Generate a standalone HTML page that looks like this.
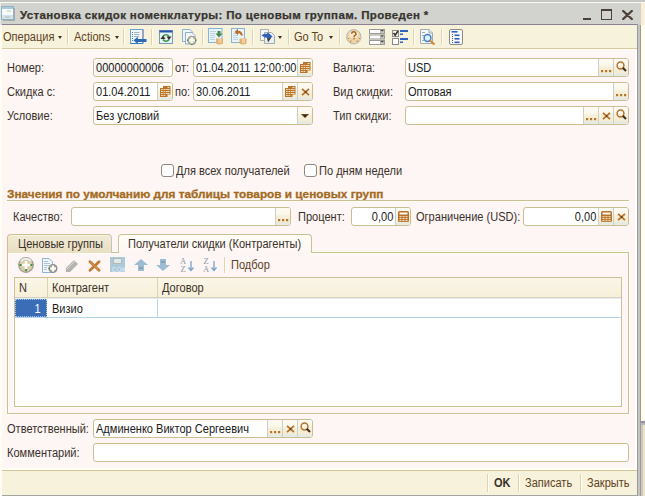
<!DOCTYPE html><html><head><meta charset="utf-8"><style>
*{box-sizing:border-box;margin:0;padding:0}
html,body{width:645px;height:496px;overflow:hidden;background:#fff;font-family:"Liberation Sans",sans-serif;font-size:11px;color:#3a3228}
.a{position:absolute}
.lbl{position:absolute;white-space:nowrap;color:#3a3129;font-size:12px;line-height:13px;transform:scaleX(0.92);transform-origin:0 0}
.fld{position:absolute;height:19px;border:1px solid #cbbd92;border-radius:3px;background:#fff;overflow:hidden}
.fld .t{position:absolute;left:2px;top:3px;font-size:12px;line-height:13px;color:#202020;white-space:nowrap;transform:scaleX(0.92);transform-origin:0 0}
.btn{position:absolute;top:0;bottom:0;width:15px;background:linear-gradient(#fcfaf3 0,#faf6ea 40%,#f6efda 45%,#f4ecd4 82%,#e2eae4 88%,#e6ece6 100%);border-left:1px solid #cdcfca}
.sep{position:absolute;width:1px;background:#e0d4ae;box-shadow:1px 0 0 #fffdf5}
.tbt{position:absolute;white-space:nowrap;color:#604222;font-size:12px;line-height:13px;transform:scaleX(0.92);transform-origin:0 0}
.arr{position:absolute;width:0;height:0;border-left:2.5px solid transparent;border-right:2.5px solid transparent;border-top:3px solid #3a3228}
.dots{position:absolute;left:2px;bottom:3px;width:10px;height:2px;background:linear-gradient(90deg,#c07828 0 2px,transparent 2px 4px,#c07828 4px 6px,transparent 6px 8px,#c07828 8px 10px)}
</style></head><body>
<div class="a" style="left:0px;top:0px;width:645px;height:2px;background:#c6c6c2;"></div>
<div class="a" style="left:0px;top:2px;width:645px;height:1px;background:#fbfaf2;"></div>
<div class="a" style="left:0px;top:3px;width:641px;height:22px;background:#d2d2ce;"></div>
<div class="a" style="left:641px;top:3px;width:4px;height:22px;background:#f7f0d6;"></div>
<div class="a" style="left:1px;top:24px;width:637px;height:1px;background:#8a8294;"></div>
<div class="a" style="left:2px;top:25px;width:635px;height:23px;background:#f7f2dc;"></div>
<div class="a" style="left:2px;top:48px;width:635px;height:1px;background:#d6c9a0;"></div>
<div class="a" style="left:2px;top:49px;width:635px;height:421px;background:#fdf6f5;"></div>
<div class="a" style="left:2px;top:49px;width:635px;height:1px;background:#fffcf2;"></div>
<div class="a" style="left:2px;top:468px;width:635px;height:2px;background:#fffdf4;"></div>
<div class="a" style="left:2px;top:470px;width:635px;height:1px;background:#d2c49c;"></div>
<div class="a" style="left:2px;top:471px;width:635px;height:24px;background:#f7f2dc;"></div>
<div class="a" style="left:1px;top:495px;width:637px;height:1px;background:#a4a4a0;"></div>
<div class="a" style="left:0px;top:3px;width:2px;height:493px;background:#fffef2;"></div>
<div class="a" style="left:0px;top:3px;width:1px;height:22px;background:#e6e6de;"></div>
<div class="a" style="left:1px;top:3px;width:1px;height:22px;background:#d2d2ce;"></div>
<div class="a" style="left:635px;top:49px;width:2px;height:421px;background:#fffdf8;"></div>
<div class="a" style="left:637px;top:24px;width:1px;height:472px;background:#9d96a4;"></div>
<div class="a" style="left:638px;top:25px;width:2px;height:471px;background:#c4c4c0;"></div>
<div class="a" style="left:640px;top:25px;width:1px;height:471px;background:#9a9a96;"></div>
<div class="a" style="left:641px;top:25px;width:4px;height:471px;background:#fffdf0;"></div>
<div class="a" style="left:641px;top:421px;width:4px;height:2px;background:#9890a0;"></div>
<div class="a" style="left:641px;top:423px;width:4px;height:2px;background:#b8b8b4;"></div>
<div class="a" style="left:641px;top:425px;width:2px;height:71px;background:#c8c8c4;"></div>
<div class="a" style="left:643px;top:425px;width:2px;height:71px;background:#ece2c4;"></div>
<svg class="a" style="left:1px;top:6px" width="14" height="15" viewBox="0 0 14 15">
<rect x="0.5" y="0.5" width="12" height="13" fill="#f4f9fc" stroke="#8fb2c8"/>
<rect x="1" y="1" width="11" height="2" fill="#a9c9dc"/>
<rect x="1" y="9" width="11" height="4" fill="#cfe3ee"/>
<line x1="6" y1="5" x2="10" y2="5" stroke="#b9c9a0"/>
<line x1="4" y1="11" x2="9" y2="11" stroke="#c9b79a"/>
<rect x="13" y="2" width="1" height="12" fill="#a8a8a4"/>
<rect x="2" y="14" width="12" height="1" fill="#a8a8a4"/>
</svg>
<div class="a" style="left:20px;top:8px;font-size:11.5px;letter-spacing:0.36px;font-weight:bold;color:#38352f;-webkit-text-stroke:0.25px #38352f;white-space:nowrap;line-height:14px">Установка скидок номенклатуры: По ценовым группам. Проведен *</div>
<div class="a" style="left:583px;top:17.5px;width:8px;height:2.5px;background:#4a4038;"></div>
<div class="a" style="left:601px;top:9px;width:11px;height:11px;border:1.3px solid #4a4038;border-top-width:2px"></div>
<svg class="a" style="left:622px;top:10px" width="11" height="10" viewBox="0 0 11 10"><path d="M1.2 1 L9.8 9 M9.8 1 L1.2 9" stroke="#4a4038" stroke-width="2.3" stroke-linecap="round"/></svg>
<div class="tbt" style="left:3px;top:31px;">Операция</div>
<div class="arr" style="left:58px;top:36px;border-top-color:#3a3228"></div>
<div class="sep" style="left:67px;top:29px;height:16px"></div>
<div class="tbt" style="left:74px;top:31px;">Actions</div>
<div class="arr" style="left:115px;top:36px;border-top-color:#3a3228"></div>
<div class="sep" style="left:123px;top:29px;height:16px"></div>
<svg class="a" style="left:130px;top:29px" width="17" height="17" viewBox="0 0 17 17">
<rect x="0.5" y="0.5" width="12.5" height="14" fill="#eef6fb" stroke="#6f9fcf"/>
<rect x="12.5" y="1" width="1" height="13" fill="#8a7a9a"/>
<path d="M4 3.5h5.5M4 5.5h5.5M4 7.5h5" stroke="#a8b0b8"/>
<path d="M2 3.5h1M2 5.5h1M2 7.5h1M2 9.5h1M2 11.5h1" stroke="#5080b0"/>
<rect x="0.5" y="14" width="12.5" height="1" fill="#3f7fc0"/>
<path d="M3.5 11.3 L7.8 7.8 L7.8 10 L16.5 10 L16.5 13 L7.8 13 L7.8 15.2 Z" fill="#2a68b8"/>
</svg>
<div class="sep" style="left:151px;top:29px;height:16px"></div>
<svg class="a" style="left:159px;top:30px" width="14" height="14" viewBox="0 0 14 14">
<rect x="0.5" y="0.5" width="13" height="13" fill="#e6f4fa" stroke="#7a9ab4"/>
<rect x="0.5" y="0.5" width="13" height="2" fill="#2452b0"/>
<path d="M4 6.5 a3.5 3.5 0 0 1 6 0 M10 9.5 a3.5 3.5 0 0 1 -6 0" stroke="#3a9a4a" stroke-width="1.5" fill="none"/>
<path d="M1.5 9 L4 5.5 L6.5 9Z" fill="#3a3020"/>
<path d="M7.5 6.5 L12.5 6.5 L10 10Z" fill="#3a3020"/>
</svg>
<svg class="a" style="left:182px;top:29px" width="16" height="16" viewBox="0 0 16 16">
<path d="M0.5 0.5 H8 L10.5 3 V12.5 H0.5Z" fill="#eef6fb" stroke="#8fb0cc"/>
<path d="M3.5 3.5 H10 L13 6.5 V15 H3.5Z" fill="#f6f9fc" stroke="#8fb0cc"/>
<circle cx="9.8" cy="11.3" r="4.6" fill="#9a9a96"/>
<circle cx="9.8" cy="11.3" r="3.4" fill="#c8c0a0"/>
<path d="M9.8 8.3v6M6.8 11.3h6" stroke="#f8fbf8" stroke-width="2.2"/>
<rect x="5.2" y="10.5" width="1.3" height="1.6" fill="#3f8f3f"/><rect x="13.1" y="10.5" width="1.3" height="1.6" fill="#3f8f3f"/>
<rect x="9" y="15" width="1.6" height="1" fill="#3f8f3f"/>
</svg>
<div class="sep" style="left:202px;top:29px;height:16px"></div>
<svg class="a" style="left:208px;top:28px" width="16" height="17" viewBox="0 0 16 17">
<rect x="0.5" y="0.5" width="13.5" height="14" fill="#e8f4fa" stroke="#8ab4d4"/>
<path d="M2 3.5h6M2 5.5h5M2 7.5h5M2 9.5h5M2 11.5h5" stroke="#c0d4e0"/>
<path d="M9.5 3 L12.5 3 L12.5 5.5 L14.5 5.5 L11 9.5 L7.5 5.5 L9.5 5.5Z" fill="#4a8a48"/>
<path d="M8 10.5 h7 v5 q-3.5 2 -7 0Z" fill="#e2b070"/>
<path d="M8 10.5 q3.5 -1.2 7 0" fill="#f0d0a0"/>
<path d="M10.5 12h3M10.5 14h3" stroke="#fff4e0" stroke-width="0.9"/>
</svg>
<svg class="a" style="left:231px;top:28px" width="16" height="17" viewBox="0 0 16 17">
<rect x="0.5" y="0.5" width="13" height="14" fill="#e8f4fa" stroke="#8ab4d4"/>
<path d="M2 5.5h5M2 7.5h5M2 9.5h5M2 11.5h5" stroke="#c0d4e0"/>
<path d="M3.5 4 L7 0.8 L7 2.8 Q11 2.8 12 7.5 L10 7.5 Q9.5 5.2 7 5.2 L7 7.2Z" fill="#b86e28"/>
<path d="M8.5 10.5 h7 v5 q-3.5 2 -7 0Z" fill="#e2b070"/>
<path d="M8.5 10.5 q3.5 -1.2 7 0" fill="#f0d0a0"/>
<path d="M11 12h3M11 14h3" stroke="#fff4e0" stroke-width="0.9"/>
</svg>
<div class="sep" style="left:252px;top:29px;height:16px"></div>
<svg class="a" style="left:260px;top:29px" width="16" height="16" viewBox="0 0 16 16">
<rect x="0.5" y="0.5" width="8" height="11" fill="#f4f6f8" stroke="#b0b0b0"/>
<path d="M4.5 3.5 H11.5 L14.5 6.5 V14.5 H4.5Z" fill="#e4f2f8" stroke="#a8a8a8"/>
<path d="M1.5 6.5 Q4 4 6.5 5 L8 3.5 L12.5 7.5 L8.5 11 L8 9 Q5 9 1.5 6.5Z" fill="#2f62b4"/>
<path d="M7 9 L11 9 L8 13.5Z" fill="#4a3a2a"/>
</svg>
<div class="arr" style="left:278px;top:36px;border-top-color:#3a3228"></div>
<div class="sep" style="left:288px;top:29px;height:16px"></div>
<div class="tbt" style="left:294px;top:31px;">Go To</div>
<div class="arr" style="left:329px;top:36px;border-top-color:#3a3228"></div>
<div class="sep" style="left:339px;top:29px;height:16px"></div>
<svg class="a" style="left:346px;top:29px" width="16" height="16" viewBox="0 0 16 16">
<circle cx="7.8" cy="7.8" r="7.2" fill="#ecd4a6" stroke="#aab0bc" stroke-width="0.9"/>
<ellipse cx="7.8" cy="5.5" rx="4.5" ry="3.6" fill="#f6ead0"/>
<path d="M5.6 4.8 a2.2 2 0 1 1 3.2 1.8 q-0.8 0.4 -0.8 1.6" stroke="#a8621e" stroke-width="1.5" fill="none"/>
<rect x="7.3" y="9" width="1.3" height="1.3" fill="#a8621e"/>
<g fill="#c88838"><rect x="4" y="11.5" width="1.4" height="1.4"/><rect x="10.5" y="11.5" width="1.4" height="1.4"/><rect x="2" y="9" width="1" height="1"/><rect x="13" y="9" width="1" height="1"/></g>
</svg>
<svg class="a" style="left:369px;top:29px" width="16" height="16" viewBox="0 0 16 16">
<g fill="#9a9a98"><rect x="0" y="0" width="16" height="5"/><rect x="0" y="5.5" width="16" height="5"/><rect x="0" y="11" width="16" height="5"/></g>
<g fill="#fff"><rect x="1" y="1" width="10" height="3"/><rect x="1" y="6.5" width="10" height="3"/><rect x="1" y="12" width="10" height="3"/></g>
<g fill="#c8c8c4"><rect x="11.5" y="1" width="3.5" height="3"/><rect x="11.5" y="6.5" width="3.5" height="3"/><rect x="11.5" y="12" width="3.5" height="3"/></g>
<g fill="#4a3a30"><path d="M11.5 1h3.5l-1.75 1.5z"/><path d="M11.5 6.5h3.5l-1.75 1.5z"/><path d="M11.5 12h3.5l-1.75 1.5z"/></g>
</svg>
<svg class="a" style="left:392px;top:29px" width="17" height="16" viewBox="0 0 17 16">
<rect x="0.5" y="1.5" width="6" height="6" fill="#f4f4f0" stroke="#8a8a88"/>
<path d="M1.5 4 L3.2 6.2 L6 2" stroke="#3a2a20" stroke-width="1.5" fill="none"/>
<rect x="0.5" y="9.5" width="6" height="6" fill="#fff" stroke="#8a8a88"/>
<rect x="8" y="1" width="8" height="2" fill="#2f62c0"/><rect x="8" y="4.5" width="3" height="1.5" fill="#2f62c0"/>
<rect x="8" y="9" width="8" height="2" fill="#2f62c0"/><rect x="8" y="12.5" width="3" height="1.5" fill="#2f62c0"/>
</svg>
<div class="sep" style="left:413px;top:29px;height:16px"></div>
<svg class="a" style="left:420px;top:29px" width="17" height="16" viewBox="0 0 17 16">
<path d="M0.5 0.5 H9 L12.5 4 V14.5 H0.5Z" fill="#f6f8fa" stroke="#a0aab4"/>
<path d="M9 0.5 V4 H12.5" fill="#dde6ee" stroke="#a0aab4"/>
<rect x="2" y="3" width="3" height="1" fill="#9aaabb"/><rect x="2" y="6" width="2" height="1" fill="#9aaabb"/><rect x="2" y="11" width="2" height="1" fill="#9aaabb"/>
<circle cx="7.5" cy="9" r="3.4" fill="#e4f0f8" stroke="#3f82c4" stroke-width="1.5"/>
<path d="M10 11.5 L14.5 15.5" stroke="#d48a3a" stroke-width="2.2"/>
</svg>
<div class="sep" style="left:441px;top:29px;height:16px"></div>
<svg class="a" style="left:449px;top:29px" width="14" height="16" viewBox="0 0 14 16">
<rect x="0.5" y="0.5" width="13" height="15" rx="1.5" fill="#fafafa" stroke="#8c8c8c"/>
<rect x="2.5" y="2" width="6" height="1.6" fill="#2f62c0"/>
<rect x="5.5" y="5.5" width="5" height="1.6" fill="#2f62c0"/>
<rect x="5.5" y="9" width="5" height="1.6" fill="#2f62c0"/>
<rect x="5.5" y="12.5" width="5" height="1.6" fill="#2f62c0"/>
<g fill="#555"><rect x="3" y="5" width="1" height="1"/><rect x="3" y="7" width="1" height="1"/><rect x="3" y="9" width="1" height="1"/><rect x="3" y="11" width="1" height="1"/><rect x="3" y="13" width="1" height="1"/></g>
</svg>
<div class="lbl" style="left:7px;top:62px;">Номер:</div>
<div class="fld" style="left:93px;top:58px;width:80px;height:19px;background:#fff"></div>
<div class="a" style="left:95px;top:60px;width:74px;height:15px;background:#f7f4f0;"></div>
<div class="lbl" style="left:96px;top:62px;color:#202020">00000000006</div>
<div class="lbl" style="left:175px;top:62px;">от:</div>
<div class="fld" style="left:193px;top:58px;width:120px;height:19px;background:#fff"><div class="t" style="left:2px;color:#202020">01.04.2011 12:00:00</div><div class="btn" style="left:103px"><svg class="a" style="left:2px;top:3px" width="12" height="12" viewBox="0 0 12 12"><rect x="3" y="0" width="7.5" height="8.5" fill="#b8742a"/><rect x="0" y="2" width="7.5" height="9" fill="#b8742a"/><g fill="#f2dcb8"><rect x="7.5" y="1" width="2" height="1"/><rect x="7.5" y="3" width="2" height="1"/><rect x="7.5" y="5" width="2" height="1"/><rect x="7.5" y="7" width="2" height="1"/><rect x="1" y="3" width="1.8" height="1"/><rect x="3.5" y="3" width="1.8" height="1"/><rect x="6" y="3" width="1.8" height="1"/><rect x="1" y="5" width="1.8" height="1"/><rect x="3.5" y="5" width="1.8" height="1"/><rect x="1" y="7" width="1.8" height="1"/><rect x="3.5" y="7" width="1.8" height="1"/><rect x="1" y="9" width="1.8" height="1"/><rect x="3.5" y="9" width="1.8" height="1"/><rect x="6" y="5" width="1.8" height="1"/><rect x="6" y="7" width="1.8" height="1"/></g></svg></div></div>
<div class="lbl" style="left:333px;top:62px;">Валюта:</div>
<div class="fld" style="left:405px;top:58px;width:224px;height:19px;background:#fff"><div class="t" style="left:2px;color:#202020">USD</div><div class="btn" style="left:192px"><svg class="a" style="left:2px;top:11px" width="11" height="3"><rect x="0" y="0" width="2.2" height="2.2" fill="#b8742a"/><rect x="4" y="0" width="2.2" height="2.2" fill="#b8742a"/><rect x="8" y="0" width="2.2" height="2.2" fill="#b8742a"/></svg></div><div class="btn" style="left:207px"><svg class="a" style="left:2px;top:2px" width="11" height="11" viewBox="0 0 11 11"><circle cx="4.5" cy="4.5" r="3.4" fill="none" stroke="#b8742a" stroke-width="1.5"/><path d="M6.8 6.8 L10 10" stroke="#3a3028" stroke-width="2.1"/></svg></div></div>
<div class="lbl" style="left:7px;top:86px;">Скидка с:</div>
<div class="fld" style="left:93px;top:82px;width:80px;height:19px;background:#fff"><div class="t" style="left:2px;color:#202020">01.04.2011</div><div class="btn" style="left:63px"><svg class="a" style="left:2px;top:3px" width="12" height="12" viewBox="0 0 12 12"><rect x="3" y="0" width="7.5" height="8.5" fill="#b8742a"/><rect x="0" y="2" width="7.5" height="9" fill="#b8742a"/><g fill="#f2dcb8"><rect x="7.5" y="1" width="2" height="1"/><rect x="7.5" y="3" width="2" height="1"/><rect x="7.5" y="5" width="2" height="1"/><rect x="7.5" y="7" width="2" height="1"/><rect x="1" y="3" width="1.8" height="1"/><rect x="3.5" y="3" width="1.8" height="1"/><rect x="6" y="3" width="1.8" height="1"/><rect x="1" y="5" width="1.8" height="1"/><rect x="3.5" y="5" width="1.8" height="1"/><rect x="1" y="7" width="1.8" height="1"/><rect x="3.5" y="7" width="1.8" height="1"/><rect x="1" y="9" width="1.8" height="1"/><rect x="3.5" y="9" width="1.8" height="1"/><rect x="6" y="5" width="1.8" height="1"/><rect x="6" y="7" width="1.8" height="1"/></g></svg></div></div>
<div class="lbl" style="left:175px;top:86px;">по:</div>
<div class="fld" style="left:193px;top:82px;width:120px;height:19px;background:#fff"><div class="t" style="left:2px;color:#202020">30.06.2011</div><div class="btn" style="left:88px"><svg class="a" style="left:2px;top:3px" width="12" height="12" viewBox="0 0 12 12"><rect x="3" y="0" width="7.5" height="8.5" fill="#b8742a"/><rect x="0" y="2" width="7.5" height="9" fill="#b8742a"/><g fill="#f2dcb8"><rect x="7.5" y="1" width="2" height="1"/><rect x="7.5" y="3" width="2" height="1"/><rect x="7.5" y="5" width="2" height="1"/><rect x="7.5" y="7" width="2" height="1"/><rect x="1" y="3" width="1.8" height="1"/><rect x="3.5" y="3" width="1.8" height="1"/><rect x="6" y="3" width="1.8" height="1"/><rect x="1" y="5" width="1.8" height="1"/><rect x="3.5" y="5" width="1.8" height="1"/><rect x="1" y="7" width="1.8" height="1"/><rect x="3.5" y="7" width="1.8" height="1"/><rect x="1" y="9" width="1.8" height="1"/><rect x="3.5" y="9" width="1.8" height="1"/><rect x="6" y="5" width="1.8" height="1"/><rect x="6" y="7" width="1.8" height="1"/></g></svg></div><div class="btn" style="left:103px"><svg class="a" style="left:3px;top:5px" width="9" height="8" viewBox="0 0 9 8"><path d="M1 0.8 L8 7.2 M8 0.8 L1 7.2" stroke="#b8742a" stroke-width="1.8"/><rect x="3.8" y="3.3" width="1.5" height="1.5" fill="#3a3028"/></svg></div></div>
<div class="lbl" style="left:333px;top:86px;">Вид скидки:</div>
<div class="fld" style="left:405px;top:82px;width:224px;height:19px;background:#fff"><div class="t" style="left:2px;color:#202020">Оптовая</div><div class="btn" style="left:207px"><svg class="a" style="left:2px;top:11px" width="11" height="3"><rect x="0" y="0" width="2.2" height="2.2" fill="#b8742a"/><rect x="4" y="0" width="2.2" height="2.2" fill="#b8742a"/><rect x="8" y="0" width="2.2" height="2.2" fill="#b8742a"/></svg></div></div>
<div class="lbl" style="left:7px;top:110px;">Условие:</div>
<div class="fld" style="left:93px;top:106px;width:220px;height:19px;background:#fff"><div class="t" style="left:2px;color:#202020">Без условий</div><div class="btn" style="left:203px"><svg class="a" style="left:3px;top:7px" width="9" height="5" viewBox="0 0 9 5"><path d="M0 0 H8 L4 4Z" fill="#3a2a18"/><path d="M0 0 H8" stroke="#b8742a" stroke-width="0.8"/></svg></div></div>
<div class="lbl" style="left:333px;top:110px;">Тип скидки:</div>
<div class="fld" style="left:405px;top:106px;width:224px;height:19px;background:#fff"><div class="btn" style="left:177px"><svg class="a" style="left:2px;top:11px" width="11" height="3"><rect x="0" y="0" width="2.2" height="2.2" fill="#b8742a"/><rect x="4" y="0" width="2.2" height="2.2" fill="#b8742a"/><rect x="8" y="0" width="2.2" height="2.2" fill="#b8742a"/></svg></div><div class="btn" style="left:192px"><svg class="a" style="left:3px;top:5px" width="9" height="8" viewBox="0 0 9 8"><path d="M1 0.8 L8 7.2 M8 0.8 L1 7.2" stroke="#b8742a" stroke-width="1.8"/><rect x="3.8" y="3.3" width="1.5" height="1.5" fill="#3a3028"/></svg></div><div class="btn" style="left:207px"><svg class="a" style="left:2px;top:2px" width="11" height="11" viewBox="0 0 11 11"><circle cx="4.5" cy="4.5" r="3.4" fill="none" stroke="#b8742a" stroke-width="1.5"/><path d="M6.8 6.8 L10 10" stroke="#3a3028" stroke-width="2.1"/></svg></div></div>
<div class="a" style="left:161px;top:164px;width:13px;height:13px;border:1px solid #8f8a80;border-radius:3px;background:#fff"></div>
<div class="lbl" style="left:176px;top:165px;">Для всех получателей</div>
<div class="a" style="left:304px;top:164px;width:13px;height:13px;border:1px solid #8f8a80;border-radius:3px;background:#fff"></div>
<div class="lbl" style="left:319px;top:165px;">По дням недели</div>
<div class="a" style="left:7px;top:187px;font-size:11.8px;line-height:14px;font-weight:bold;color:#a46a1e;-webkit-text-stroke:0.3px #a46a1e;white-space:nowrap">Значения по умолчанию для таблицы товаров и ценовых групп</div>
<div class="a" style="left:7px;top:200px;width:622px;height:1px;background:#cdbf94;"></div>
<div class="a" style="left:7px;top:201px;width:622px;height:1px;background:#fffcf4;"></div>
<div class="lbl" style="left:13px;top:211px;">Качество:</div>
<div class="fld" style="left:71px;top:207px;width:220px;height:19px;background:#fff"><div class="btn" style="left:203px"><svg class="a" style="left:2px;top:11px" width="11" height="3"><rect x="0" y="0" width="2.2" height="2.2" fill="#b8742a"/><rect x="4" y="0" width="2.2" height="2.2" fill="#b8742a"/><rect x="8" y="0" width="2.2" height="2.2" fill="#b8742a"/></svg></div></div>
<div class="lbl" style="left:298px;top:211px;">Процент:</div>
<div class="fld" style="left:351px;top:207px;width:60px;height:19px;background:#fff"><div class="t" style="left:auto;right:17px;color:#202020;transform-origin:100% 0">0,00</div><div class="btn" style="left:43px"><svg class="a" style="left:2px;top:3px" width="11" height="12" viewBox="0 0 11 12"><rect x="0" y="0" width="11" height="11" rx="1.5" fill="#b8742a"/><rect x="1.5" y="1.5" width="8" height="2" fill="#fffaf0"/><g fill="#f0d8b4"><rect x="1.5" y="5" width="2" height="1.2"/><rect x="4.5" y="5" width="2" height="1.2"/><rect x="7.5" y="5" width="2" height="1.2"/><rect x="1.5" y="7" width="2" height="1.2"/><rect x="4.5" y="7" width="2" height="1.2"/><rect x="7.5" y="7" width="2" height="1.2"/><rect x="1.5" y="9" width="2" height="1.2"/><rect x="4.5" y="9" width="2" height="1.2"/><rect x="7.5" y="9" width="2" height="1.2"/></g></svg></div></div>
<div class="lbl" style="left:416px;top:211px;">Ограничение (USD):</div>
<div class="fld" style="left:523px;top:207px;width:106px;height:19px;background:#fff"><div class="t" style="left:auto;right:32px;color:#202020;transform-origin:100% 0">0,00</div><div class="btn" style="left:74px"><svg class="a" style="left:2px;top:3px" width="11" height="12" viewBox="0 0 11 12"><rect x="0" y="0" width="11" height="11" rx="1.5" fill="#b8742a"/><rect x="1.5" y="1.5" width="8" height="2" fill="#fffaf0"/><g fill="#f0d8b4"><rect x="1.5" y="5" width="2" height="1.2"/><rect x="4.5" y="5" width="2" height="1.2"/><rect x="7.5" y="5" width="2" height="1.2"/><rect x="1.5" y="7" width="2" height="1.2"/><rect x="4.5" y="7" width="2" height="1.2"/><rect x="7.5" y="7" width="2" height="1.2"/><rect x="1.5" y="9" width="2" height="1.2"/><rect x="4.5" y="9" width="2" height="1.2"/><rect x="7.5" y="9" width="2" height="1.2"/></g></svg></div><div class="btn" style="left:89px"><svg class="a" style="left:3px;top:5px" width="9" height="8" viewBox="0 0 9 8"><path d="M1 0.8 L8 7.2 M8 0.8 L1 7.2" stroke="#b8742a" stroke-width="1.8"/><rect x="3.8" y="3.3" width="1.5" height="1.5" fill="#3a3028"/></svg></div></div>
<div class="lbl" style="left:7px;top:423px;">Ответственный:</div>
<div class="fld" style="left:93px;top:419px;width:220px;height:19px;background:#fff"><div class="t" style="left:2px;color:#202020">Админенко Виктор Сергеевич</div><div class="btn" style="left:173px"><svg class="a" style="left:2px;top:11px" width="11" height="3"><rect x="0" y="0" width="2.2" height="2.2" fill="#b8742a"/><rect x="4" y="0" width="2.2" height="2.2" fill="#b8742a"/><rect x="8" y="0" width="2.2" height="2.2" fill="#b8742a"/></svg></div><div class="btn" style="left:188px"><svg class="a" style="left:3px;top:5px" width="9" height="8" viewBox="0 0 9 8"><path d="M1 0.8 L8 7.2 M8 0.8 L1 7.2" stroke="#b8742a" stroke-width="1.8"/><rect x="3.8" y="3.3" width="1.5" height="1.5" fill="#3a3028"/></svg></div><div class="btn" style="left:203px"><svg class="a" style="left:2px;top:2px" width="11" height="11" viewBox="0 0 11 11"><circle cx="4.5" cy="4.5" r="3.4" fill="none" stroke="#b8742a" stroke-width="1.5"/><path d="M6.8 6.8 L10 10" stroke="#3a3028" stroke-width="2.1"/></svg></div></div>
<div class="lbl" style="left:7px;top:447px;">Комментарий:</div>
<div class="fld" style="left:93px;top:443px;width:536px;height:19px;background:#fff"></div>
<div class="a" style="left:7px;top:252px;width:622px;height:162px;border:1px solid #cdbf94;background:#fdf6f5;box-shadow:inset 1px 1px 0 #fffdf6,0 1px 0 #fffdf6,1px 0 0 #fffdf6,0 -1px 0 #fffdf6"></div>
<div class="a" style="left:7px;top:234px;width:105px;height:19px;border:1px solid #cdbf94;border-right-color:#c4c4bc;border-bottom:none;border-radius:4px 4px 0 0;box-shadow:inset 0 1px 0 #f8f4e4;background:linear-gradient(#f1ead4,#e9dfc2)"></div>
<div class="lbl" style="left:18px;top:238px;">Ценовые группы</div>
<div class="a" style="left:118px;top:234px;width:194px;height:19px;border:1px solid #cdbf94;border-bottom:none;border-radius:4px 4px 0 0;box-shadow:inset 1px 1px 0 #fffdf8;background:linear-gradient(#fffdf6,#fdf6f5)"></div>
<div class="a" style="left:119px;top:251px;width:192px;height:3px;background:#fdf6f5;"></div>
<div class="lbl" style="left:128px;top:238px;">Получатели скидки (Контрагенты)</div>
<svg class="a" style="left:18px;top:257px" width="16" height="16" viewBox="0 0 16 16">
<circle cx="8" cy="8" r="7.3" fill="#d8cba8" stroke="#9a9a94" stroke-width="1.2"/>
<path d="M3 4.5 A6 6 0 0 1 13 4.5" stroke="#ececec" stroke-width="2" fill="none"/>
<path d="M8 4v8M4 8h8" stroke="#fff" stroke-width="2.4"/>
<rect x="1.5" y="7" width="2" height="2" fill="#3f8f3f"/><rect x="12.5" y="7" width="2" height="2" fill="#3f8f3f"/>
<rect x="7" y="12.2" width="2" height="2" fill="#3f8f3f"/>
</svg>
<svg class="a" style="left:42px;top:258px" width="16" height="15" viewBox="0 0 16 15">
<path d="M0.5 0.5 H7 L10.5 4 V14.5 H0.5Z" fill="#f2f8fc" stroke="#8ab4d4"/>
<g fill="#a8c4dc"><rect x="2" y="3" width="4" height="1"/><rect x="2" y="5" width="6" height="1"/><rect x="2" y="7" width="5" height="1"/><rect x="2" y="9" width="3" height="1"/><rect x="2" y="11" width="3" height="1"/></g>
<circle cx="11" cy="10.5" r="4.5" fill="#8e8e8a"/>
<circle cx="11" cy="10.5" r="3.1" fill="#bdb6a2"/>
<path d="M11 7.5v6M8 10.5h6" stroke="#fff" stroke-width="2"/>
<rect x="6.5" y="9.8" width="1.5" height="1.5" fill="#3f8f3f"/>
</svg>
<svg class="a" style="left:65px;top:259px" width="14" height="13" viewBox="0 0 14 13">
<path d="M1 9 L9 1 L13 5 L5 13 L1 13Z" fill="#b4b4b0"/><path d="M2 10 L10 2" stroke="#d8d8d4"/>
</svg>
<svg class="a" style="left:88px;top:260px" width="13" height="12" viewBox="0 0 13 12">
<path d="M2 1.8 L11 10.2 M11 1.8 L2 10.2" stroke="#c27a32" stroke-width="2.8" stroke-linecap="round"/>
<path d="M2.5 2.3 L10.5 9.7" stroke="#e0a060" stroke-width="0.9"/>
</svg>
<svg class="a" style="left:110px;top:257px" width="15" height="15" viewBox="0 0 15 15">
<rect x="0" y="0" width="15" height="15" fill="#a6cade"/>
<rect x="3.5" y="1.5" width="8" height="5" fill="#dceaf0" stroke="#b8b8b0"/>
<rect x="3" y="7.5" width="9" height="1" fill="#c0c8c8"/>
<rect x="0" y="0" width="1" height="15" fill="#b8c4c8"/>
<text x="1.5" y="14.5" font-size="6.5" font-family="Liberation Sans" font-weight="bold" fill="#d8e4ea" letter-spacing="0.3">COK</text>
</svg>
<svg class="a" style="left:134px;top:259px" width="14" height="12" viewBox="0 0 14 12">
<path d="M7 0 L14 6 L10 6 L10 12 L4 12 L4 6 L0 6Z" fill="#9cbcd2"/><rect x="5" y="8" width="4" height="2" fill="#8aa0b0"/>
</svg>
<svg class="a" style="left:156px;top:259px" width="14" height="12" viewBox="0 0 14 12">
<path d="M4 0 L10 0 L10 6 L14 6 L7 12 L0 6 L4 6Z" fill="#9cbcd2"/><rect x="5" y="2" width="4" height="2" fill="#8aa0b0"/>
</svg>
<svg class="a" style="left:180px;top:257px" width="15" height="15" viewBox="0 0 15 15">
<text x="0" y="7" font-size="8.5" font-family="Liberation Serif" fill="#8a9aa4">A</text>
<text x="0.5" y="14.5" font-size="8.5" font-family="Liberation Serif" fill="#8a9aa4">Z</text>
<path d="M11 4 V13 M8.5 10.5 L11 13.5 L13.5 10.5" stroke="#7aa4c8" stroke-width="1.3" fill="none"/>
</svg>
<svg class="a" style="left:203px;top:257px" width="15" height="15" viewBox="0 0 15 15">
<text x="0.5" y="7" font-size="8.5" font-family="Liberation Serif" fill="#8a9aa4">Z</text>
<text x="0" y="14.5" font-size="8.5" font-family="Liberation Serif" fill="#8a9aa4">A</text>
<path d="M11 4 V13 M8.5 10.5 L11 13.5 L13.5 10.5" stroke="#7aa4c8" stroke-width="1.3" fill="none"/>
</svg>
<div class="sep" style="left:224px;top:257px;height:16px"></div>
<div class="tbt" style="left:231px;top:259px;">Подбор</div>
<div class="a" style="left:14px;top:277px;width:608px;height:130px;border:1px solid #cdbf94;background:#fff;box-shadow:0 1px 0 #fffdf6,-1px 0 0 #fffdf6"></div>
<div class="a" style="left:15px;top:278px;width:606px;height:20px;background:linear-gradient(#faf6e8,#f6efd8);"></div>
<div class="a" style="left:15px;top:297px;width:606px;height:1px;background:#d4d0c4;"></div>
<div class="a" style="left:15px;top:298px;width:606px;height:1px;background:#e8eef0;"></div>
<div class="a" style="left:47px;top:278px;width:1px;height:20px;background:#dcd2b4;"></div>
<div class="a" style="left:157px;top:278px;width:1px;height:20px;background:#dcd2b4;"></div>
<div class="a" style="left:621px;top:278px;width:1px;height:20px;background:#cdbf94;"></div>
<div class="lbl" style="left:19px;top:282px;">N</div>
<div class="lbl" style="left:52px;top:282px;">Контрагент</div>
<div class="lbl" style="left:162px;top:282px;">Договор</div>
<div class="a" style="left:15px;top:299px;width:32px;height:18px;background:#3a6db5;"></div>
<div class="a" style="left:15px;top:299px;width:32px;height:18px;border:1px dotted #a8c8ec"></div>
<div class="lbl" style="left:15px;top:303px;width:28px;text-align:right;color:#fff">1</div>
<div class="a" style="left:157px;top:299px;width:1px;height:18px;background:#b8d8ee;"></div>
<div class="a" style="left:15px;top:317px;width:606px;height:1px;background:#b4d4ec;"></div>
<div class="lbl" style="left:52px;top:303px;color:#1a1a1a">Визио</div>
<div class="sep" style="left:487px;top:474px;height:18px"></div>
<div class="tbt" style="left:494px;top:476px;font-weight:bold;font-size:12px;line-height:14px;color:#3a3228">OK</div>
<div class="sep" style="left:518px;top:474px;height:18px"></div>
<div class="tbt" style="left:525px;top:477px;">Записать</div>
<div class="sep" style="left:580px;top:474px;height:18px"></div>
<div class="tbt" style="left:587px;top:477px;">Закрыть</div>
</body></html>
